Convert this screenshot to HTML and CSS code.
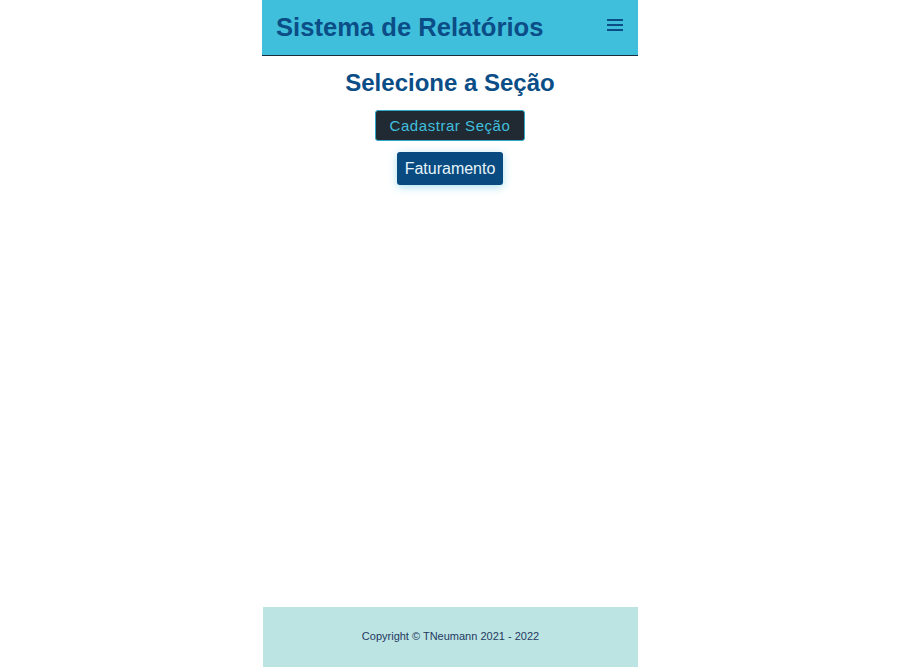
FILE: index.html
```html
<!DOCTYPE html>
<html lang="pt-BR">
<head>
<meta charset="utf-8">
<title>Sistema de Relatórios</title>
<link rel="stylesheet" href="styles.css">
</head>
<body>
<div class="page">
  <header class="topbar">
    <h1 class="brand">Sistema de Relatórios</h1>
    <button class="menu" aria-label="menu">
      <svg width="16" height="12" viewBox="0 0 16 12"><rect x="0" y="0" width="16" height="2" fill="#0b4d86"/><rect x="0" y="5" width="16" height="2" fill="#0b4d86"/><rect x="0" y="10" width="16" height="2" fill="#0b4d86"/></svg>
    </button>
  </header>
  <main class="content">
    <h2 class="title">Selecione a Seção</h2>
    <button class="btn-dark">Cadastrar Seção</button>
    <button class="btn-section">Faturamento</button>
  </main>
  <footer class="footer">Copyright © TNeumann 2021 - 2022</footer>
</div>
</body>
</html>
```
FILE: styles.css
```css
html, body { margin: 0; padding: 0; }
body {
  font-family: "Liberation Sans", Arial, sans-serif;
  background: #fff;
}
.page {
  width: 376px;
  margin: 0 auto;
  min-height: 667px;
  display: flex;
  flex-direction: column;
}
.topbar {
  height: 55px;
  background: #40bfdd;
  border-bottom: 1px solid #1a2e3d;
  display: flex;
  align-items: center;
  justify-content: space-between;
  padding: 0 15px 0 14px;
}
.brand {
  margin: 0;
  font-size: 25.6px;
  font-weight: bold;
  color: #0b4d86;
}
.menu {
  background: none;
  border: 0;
  padding: 0;
  display: flex;
  margin-top: -5px;
}
.content {
  flex: 1;
  display: flex;
  flex-direction: column;
  align-items: center;
}
.title {
  margin: 13px 0 0;
  font-size: 24px;
  font-weight: bold;
  color: #0b4d86;
}
.btn-dark {
  margin-top: 13px;
  height: 31px;
  padding: 0 14px;
  background: #212a33;
  border: 1px solid #2fa9c9;
  border-radius: 3px;
  color: #40bfdd;
  font-family: "Liberation Sans", Arial, sans-serif;
  font-size: 15px;
  letter-spacing: 0.55px;
}
.btn-section {
  margin-top: 11px;
  height: 33px;
  padding: 0 8px;
  background: #094a80;
  border: 0;
  border-radius: 3px;
  color: #e6f4fa;
  font-family: "Liberation Sans", Arial, sans-serif;
  font-size: 16px;
  box-shadow: 0 2px 8px rgba(64, 191, 221, 0.45);
}
.footer {
  margin-left: 1px;
  height: 60px;
  padding-bottom: 2px;
  box-sizing: border-box;
  background: #bce4e3;
  display: flex;
  align-items: center;
  justify-content: center;
  font-size: 11px;
  color: #1f3a5f;
}
```
